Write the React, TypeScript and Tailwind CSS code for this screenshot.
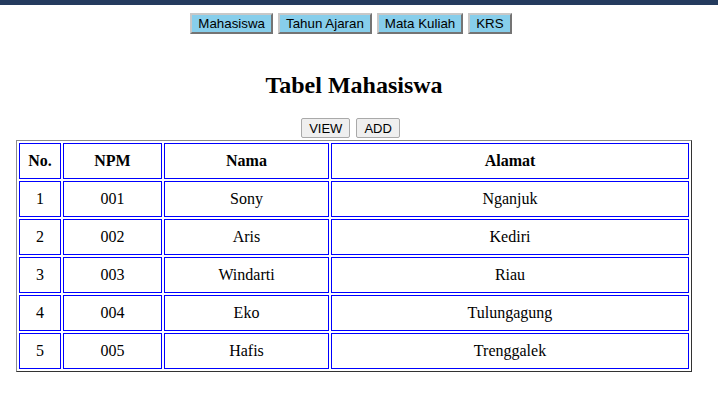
const navItems = ["Mahasiswa", "Tahun Ajaran", "Mata Kuliah", "KRS"];

const rows = [
  { no: 1, npm: "001", nama: "Sony", alamat: "Nganjuk" },
  { no: 2, npm: "002", nama: "Aris", alamat: "Kediri" },
  { no: 3, npm: "003", nama: "Windarti", alamat: "Riau" },
  { no: 4, npm: "004", nama: "Eko", alamat: "Tulungagung" },
  { no: 5, npm: "005", nama: "Hafis", alamat: "Trenggalek" },
];

const cell = "border border-[#0000ff] h-[36px] text-center";

export default function App() {
  return (
    <div className="min-h-screen bg-white text-black font-['Liberation_Serif',serif]">
      <div className="h-[5px] bg-[#243b5e]" />

      <div className="pl-[16px] pr-[26px]">
        {/* menu */}
        <div className="flex justify-center gap-[5px] pt-[8px] pr-[6px]">
          {navItems.map((item) => (
            <button
              key={item}
              className="h-[21px] px-[6px] bg-[#87ceeb] border-2 [border-style:outset] border-[#c8c8c8] text-[13.333px] leading-none text-black font-['Liberation_Sans',sans-serif]"
            >
              {item}
            </button>
          ))}
        </div>

        <h2 className="text-center text-[24px] font-bold leading-[28px] mt-[37px]">Tabel Mahasiswa</h2>

        <div className="flex justify-center gap-[6px] mt-[19px] pr-[7px]">
          <button className="h-[20px] px-[7px] bg-[#efefef] border border-[#a9a9a9] rounded-[2px] text-[13px] leading-none font-['Liberation_Sans',sans-serif]">
            VIEW
          </button>
          <button className="h-[20px] px-[7px] bg-[#efefef] border border-[#a9a9a9] rounded-[2px] text-[13px] leading-none font-['Liberation_Sans',sans-serif]">
            ADD
          </button>
        </div>

        <table className="mt-[2px] w-[676px] border-separate border-spacing-[2px] border border-t-[#8c8c8c] border-l-[#8c8c8c] border-b-[#333333] border-r-[#333333] text-[16px]">
          <thead>
            <tr>
              <th className={cell + " w-[42px]"}>No.</th>
              <th className={cell + " w-[99px]"}>NPM</th>
              <th className={cell + " w-[165px]"}>Nama</th>
              <th className={cell}>Alamat</th>
            </tr>
          </thead>
          <tbody>
            {rows.map((r) => (
              <tr key={r.no}>
                <td className={cell}>{r.no}</td>
                <td className={cell}>{r.npm}</td>
                <td className={cell}>{r.nama}</td>
                <td className={cell}>{r.alamat}</td>
              </tr>
            ))}
          </tbody>
        </table>
      </div>
    </div>
  );
}
